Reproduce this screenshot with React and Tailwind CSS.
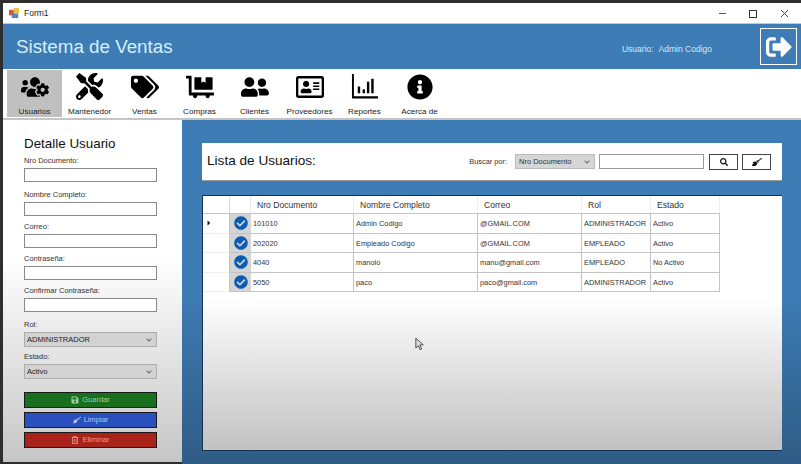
import { FaUsersCog, FaTools, FaTags, FaDollyFlatbed, FaUserFriends, FaRegAddressCard, FaInfoCircle, FaSignOutAlt, FaCheckCircle, FaSearch, FaBroom, FaSave, FaRegTrashAlt, FaCaretRight, FaChevronDown } from 'react-icons/fa';

const ReportIcon = ({ className }) => (
  <svg viewBox="0 0 28 28" className={className} fill="currentColor">
    <path d="M1 1h2v23h25v2.5H1z" />
    <rect x="7" y="14" width="2.5" height="7" />
    <rect x="12" y="17" width="2.5" height="4" />
    <rect x="16.5" y="9" width="2.5" height="12" />
    <rect x="21" y="6" width="2.5" height="15" />
  </svg>
);

const MENU = [
  { label: 'Usuarios', icon: FaUsersCog, size: 'w-[28px] h-[28px]', active: true },
  { label: 'Mantenedor', icon: FaTools, size: 'w-[27px] h-[27px]' },
  { label: 'Ventas', icon: FaTags, size: 'w-[28px] h-[28px]' },
  { label: 'Compras', icon: FaDollyFlatbed, size: 'w-[28px] h-[28px]' },
  { label: 'Clientes', icon: FaUserFriends, size: 'w-[28px] h-[28px]' },
  { label: 'Proveedores', icon: FaRegAddressCard, size: 'w-[28px] h-[28px]' },
  { label: 'Reportes', icon: ReportIcon, size: 'w-[27px] h-[27px]' },
  { label: 'Acerca de', icon: FaInfoCircle, size: 'w-[26px] h-[26px]' },
];

const ROWS = [
  ['101010', 'Admin Codigo', '@GMAIL.COM', 'ADMINISTRADOR', 'Activo'],
  ['202020', 'Empleado Codigo', '@GMAIL.COM', 'EMPLEADO', 'Activo'],
  ['4040', 'manolo', 'manu@gmail.com', 'EMPLEADO', 'No Activo'],
  ['5050', 'paco', 'paco@gmail.com', 'ADMINISTRADOR', 'Activo'],
];

const COLS = ['w-[103px]', 'w-[124px]', 'w-[104px]', 'w-[69px]', 'w-[69px]'];
const HEADERS = ['Nro Documento', 'Nombre Completo', 'Correo', 'Rol', 'Estado'];

const TextField = ({ label, mb }) => (
  <div className={mb}>
    <div className="h-[12px] leading-[12px] text-[7.5px] text-[#333]">{label}</div>
    <div className="mt-[1px] h-[14px] w-[133px] bg-white border border-[#8a8a8a]" />
  </div>
);

const Combo = ({ label, value, mb }) => (
  <div className={mb}>
    <div className="h-[12px] leading-[12px] text-[7.5px] text-[#333]">{label}</div>
    <div className="mt-[1px] h-[15px] w-[133px] bg-[#d2d2d2] border border-[#adadad] flex items-center justify-between pl-[2px] pr-[4px] text-[7.5px] text-[#222]">
      <span>{value}</span>
      <FaChevronDown className="w-[6px] h-[6px] text-[#666]" />
    </div>
  </div>
);

const ActionButton = ({ icon: Icon, label, color, text }) => (
  <div className={`h-[16px] w-[133px] border border-[#1a1a1a] flex items-center justify-center gap-[3px] text-[7.5px] ${color} ${text}`}>
    <Icon className="w-[8px] h-[8px]" />
    <span>{label}</span>
  </div>
);

export default function App() {
  return (
    <div className="relative w-[801px] h-[464px] overflow-hidden bg-[#2e2e2e] pt-[3px] pl-[3px] flex flex-col font-['Liberation_Sans',sans-serif]">
      {/* barra de titulo */}
      <div className="h-[21px] bg-white flex items-center justify-between shrink-0 border-b border-[#c8c8c8]">
        <div className="flex items-center gap-[4px] pl-[6px] pt-[1px]">
          <svg viewBox="0 0 12 12" className="w-[11px] h-[11px]">
            <rect x="0" y="2" width="6" height="6" fill="#c9583a" />
            <rect x="5" y="0" width="6" height="6" fill="#e8c24a" />
            <rect x="3" y="6" width="7" height="5" fill="#5a83c4" />
          </svg>
          <span className="text-[8.5px] text-[#222]">Form1</span>
        </div>
        <div className="flex items-center gap-[23px] pr-[12px] pt-[1px] text-[#333]">
          <div className="w-[7px] h-[1.5px] bg-[#555]" />
          <div className="w-[8px] h-[8px] border-[1.5px] border-[#333]" />
          <svg viewBox="0 0 10 10" className="w-[9px] h-[9px]" stroke="#333" strokeWidth="1">
            <path d="M1 1l8 8M9 1l-8 8" />
          </svg>
        </div>
      </div>

      {/* cabecera */}
      <div className="h-[45px] bg-[#3d7cb5] flex items-center justify-between shrink-0 pl-[13px] pr-[4px]">
        <span className="text-[18.8px] mt-[1px] text-[#d6effc]">Sistema de Ventas</span>
        <div className="flex items-center">
          <div className="flex gap-[5px] text-[8.5px] text-[#d6e8f6] mt-[6px] mr-[48px]">
            <span>Usuario:</span>
            <span>Admin Codigo</span>
          </div>
          <div className="w-[37px] h-[37px] border-[1.5px] border-white flex items-center justify-center">
            <FaSignOutAlt className="w-[26px] h-[26px] text-white" />
          </div>
        </div>
      </div>

      {/* menu */}
      <div className="h-[51px] bg-white flex items-start shrink-0 pl-[4px] pt-[1px] border-b-2 border-[#c4c4c4]">
        {MENU.map(({ label, icon: Icon, size, active }) => (
          <div key={label} className={`w-[55px] h-[47px] flex flex-col items-center ${active ? 'bg-[#c0c0c0]' : ''}`}>
            <div className="h-[33px] flex items-center justify-center">
              <Icon className={`${size} text-black`} />
            </div>
            <span className="mt-[3px] text-[8.1px] leading-[11px] text-[#222] whitespace-nowrap">{label}</span>
          </div>
        ))}
      </div>

      <div className="flex-1 flex min-h-0">
        {/* panel izquierdo */}
        <div className="w-[179px] shrink-0 mb-[2px] bg-gradient-to-b from-white from-40% to-[#c6c6c6] pl-[21px] pt-[14px]">
          <div className="text-[13.4px] leading-[19px] text-[#111] mb-[2px]">Detalle Usuario</div>
          <TextField label="Nro Documento:" mb="mb-[7px]" />
          <TextField label="Nombre Completo:" mb="mb-[5px]" />
          <TextField label="Correo:" mb="mb-[5px]" />
          <TextField label="Contraseña:" mb="mb-[5px]" />
          <TextField label="Confirmar Contraseña:" mb="mb-[7px]" />
          <Combo label="Rol:" value="ADMINISTRADOR" mb="mb-[4px]" />
          <Combo label="Estado:" value="Activo" mb="mb-[13px]" />
          <div className="flex flex-col gap-[4px]">
            <ActionButton icon={FaSave} label="Guardar" color="bg-[#18701f]" text="text-[#9ccf9c]" />
            <ActionButton icon={FaBroom} label="Limpiar" color="bg-[#2a50bd]" text="text-[#b5c5ee]" />
            <ActionButton icon={FaRegTrashAlt} label="Eliminar" color="bg-[#a8231a]" text="text-[#e0a09a]" />
          </div>
        </div>

        {/* contenido */}
        <div className="flex-1 bg-gradient-to-b from-[#3d7cb5] from-50% to-[#2f5c85] pl-[20px] pr-[19px] pt-[23px]">
          <div className="h-[38px] bg-white flex items-center justify-between pl-[5px] pr-[11px] border-b border-[#9a9a9a]">
            <span className="text-[13.6px] text-[#111]">Lista de Usuarios:</span>
            <div className="flex items-center">
              <span className="text-[7.4px] text-[#333] mr-[8px]">Buscar por:</span>
              <div className="w-[80px] h-[15px] bg-[#d6d6d6] border border-[#bdbdbd] flex items-center justify-between pl-[3px] pr-[4px] text-[7.5px] text-[#333] mr-[4px]">
                <span>Nro Documento</span>
                <FaChevronDown className="w-[6px] h-[6px] text-[#666]" />
              </div>
              <div className="w-[105px] h-[15px] bg-white border border-[#9a9a9a] mr-[5px]" />
              <div className="w-[29px] h-[16px] bg-white border border-[#444] flex items-center justify-center mr-[4px]">
                <FaSearch className="w-[8px] h-[8px] text-[#111]" />
              </div>
              <div className="w-[29px] h-[16px] bg-white border border-[#444] flex items-center justify-center">
                <FaBroom className="w-[10px] h-[10px] text-[#111]" />
              </div>
            </div>
          </div>

          <div className="mt-[14px] h-[256px] border-l border-t border-b border-[#16324f] bg-gradient-to-b from-white from-40% to-[#c2c2c2]">
            <div className="w-[517px] bg-white">
              <div className="h-[18px] flex border-b border-[#c4c4c4] text-[8.6px] text-[#333]">
                <div className="w-[27px] border-r border-[#dcdcdc]" />
                <div className="w-[21px] border-r border-[#e8e8e8]" />
                {HEADERS.map((h, i) => (
                  <div key={h} className={`${COLS[i]} pl-[6px] pt-[1px] flex items-center border-r border-[#eeeeee]`}>{h}</div>
                ))}
              </div>
              {ROWS.map((row, r) => (
                <div key={row[0]} className="h-[19.5px] flex text-[7.4px] text-[#333]">
                  <div className="w-[27px] border-r border-b border-r-[#c4c4c4] border-b-[#efefef] flex items-center pl-[2px]">
                    {r === 0 && <FaCaretRight className="w-[8px] h-[8px] text-[#222]" />}
                  </div>
                  <div className="w-[21px] bg-[#d4d4d4] border-b border-[#c4c4c4] flex items-center justify-center">
                    <FaCheckCircle className="w-[14px] h-[14px] text-[#0b5cb3]" />
                  </div>
                  {row.map((cell, c) => (
                    <div key={c} className={`${COLS[c]} pl-[2px] pt-[1px] flex items-center whitespace-nowrap border-r border-b border-[#c4c4c4]`}>{cell}</div>
                  ))}
                </div>
              ))}
            </div>
          </div>
        </div>
      </div>

      {/* cursor de la captura */}
      <svg viewBox="0 0 12 16" className="absolute left-[415px] top-[337px] w-[10px] h-[14px]" fill="#d8d8d8" stroke="#555" strokeWidth="1.2">
        <path d="M1 1v12l3-3 2 5 2-1-2-5h4z" />
      </svg>
    </div>
  );
}
